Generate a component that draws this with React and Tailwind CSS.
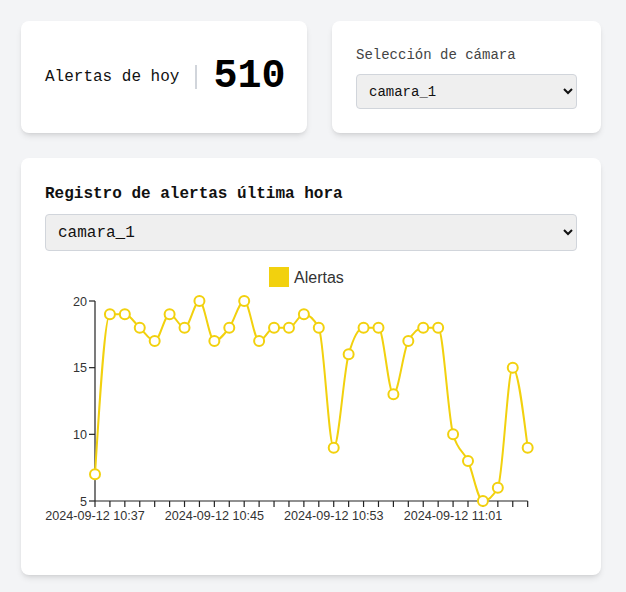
import React from "react";

const VALUES = [7, 19, 19, 18, 17, 19, 18, 20, 17, 18, 20, 17, 18, 18, 19, 18, 9, 16, 18, 18, 13, 17, 18, 18, 10, 8, 5, 6, 15, 9];
const YELLOW = "#f2d10e";
const X0 = 50;
const STEP = 14.92;
const yOf = (v) => 239 - ((v - 5) * 200) / 15;

function monotonePath(pts) {
  const n = pts.length;
  const sign = (x) => (x < 0 ? -1 : 1);
  const t = new Array(n).fill(0);
  for (let i = 1; i < n - 1; i++) {
    const [x0, y0] = pts[i - 1];
    const [x1, y1] = pts[i];
    const [x2, y2] = pts[i + 1];
    const h0 = x1 - x0, h1 = x2 - x1;
    const s0 = (y1 - y0) / h0, s1 = (y2 - y1) / h1;
    const p = (s0 * h1 + s1 * h0) / (h0 + h1);
    t[i] = (sign(s0) + sign(s1)) * Math.min(Math.abs(s0), Math.abs(s1), 0.5 * Math.abs(p)) || 0;
  }
  {
    const h = pts[1][0] - pts[0][0];
    t[0] = (3 * (pts[1][1] - pts[0][1]) / h - t[1]) / 2;
    const hl = pts[n - 1][0] - pts[n - 2][0];
    t[n - 1] = (3 * (pts[n - 1][1] - pts[n - 2][1]) / hl - t[n - 2]) / 2;
  }
  let d = `M${pts[0][0]},${pts[0][1]}`;
  for (let i = 0; i < n - 1; i++) {
    const [x0, y0] = pts[i];
    const [x1, y1] = pts[i + 1];
    const dx = (x1 - x0) / 3;
    d += `C${x0 + dx},${y0 + dx * t[i]},${x1 - dx},${y1 - dx * t[i + 1]},${x1},${y1}`;
  }
  return d;
}

function Chart() {
  const pts = VALUES.map((v, i) => [X0 + i * STEP, yOf(v)]);
  const xEnd = X0 + (VALUES.length - 1) * STEP;
  const yTicks = [20, 15, 10, 5];
  const labels = [
    [0, "2024-09-12 10:37"],
    [8, "2024-09-12 10:45"],
    [16, "2024-09-12 10:53"],
    [24, "2024-09-12 11:01"],
  ];
  return (
    <svg width="532" height="289" className="block mt-[11px]" style={{ fontFamily: '"Liberation Sans", Arial, sans-serif' }}>
      <rect x="224" y="5" width="20" height="20" fill={YELLOW} />
      <text x="249" y="21" fontSize="16" fill="#333">Alertas</text>
      <line x1={X0} y1="39" x2={X0} y2="239" stroke="#222" strokeWidth="1.2" />
      {yTicks.map((v) => (
        <g key={v}>
          <line x1={X0 - 6} y1={yOf(v)} x2={X0} y2={yOf(v)} stroke="#222" strokeWidth="1.2" />
          <text x={X0 - 8} y={yOf(v) + 4.5} fontSize="12.6" fill="#333" textAnchor="end">{v}</text>
        </g>
      ))}
      <line x1={X0} y1="239" x2={xEnd} y2="239" stroke="#222" strokeWidth="1.2" />
      {VALUES.map((_, i) => (
        <line key={i} x1={X0 + i * STEP} y1="239" x2={X0 + i * STEP} y2="245" stroke="#222" strokeWidth="1.2" />
      ))}
      {labels.map(([i, s]) => (
        <text key={i} x={X0 + i * STEP} y="258" fontSize="12.6" fill="#333" textAnchor="middle">{s}</text>
      ))}
      <path d={monotonePath(pts)} fill="none" stroke={YELLOW} strokeWidth="2" />
      {pts.map(([x, y], i) => (
        <circle key={i} cx={x} cy={y} r="5" fill="#fff" stroke={YELLOW} strokeWidth="2" />
      ))}
    </svg>
  );
}

export default function App() {
  const mono = { fontFamily: '"Liberation Mono", "DejaVu Sans Mono", monospace' };
  return (
    <div className="min-h-screen bg-[#f3f4f6] px-[21px] pt-[21px] pb-[17px]" style={mono}>
      <div className="w-[580px] flex flex-col gap-[25px]">
        <div className="grid grid-cols-[286px_269px] gap-[25px]">
          <div className="bg-white rounded-lg shadow-md p-6 flex items-center whitespace-nowrap">
            <span className="shrink-0 text-base text-[#111]">Alertas de hoy</span>
            <span className="shrink-0 mx-4 w-[2px] h-6 bg-[#d1d5db]"></span>
            <span className="shrink-0 text-[40px] leading-none font-bold text-black">510</span>
          </div>
          <div className="bg-white rounded-lg shadow-md p-6">
            <div className="text-sm leading-5 text-[#444]">Selección de cámara</div>
            <select
              className="mt-[9px] w-full h-[35px] pl-2 pr-2 text-sm text-[#111] bg-[#efefef] border border-[#d1d5db] rounded"
              style={mono}
              defaultValue="camara_1"
            >
              <option value="camara_1">camara_1</option>
            </select>
          </div>
        </div>
        <div className="bg-white rounded-lg shadow-md p-6">
          <div className="text-base leading-6 font-bold text-[#111]">Registro de alertas última hora</div>
          <select
            className="mt-2 w-full h-[37px] pl-2 pr-2 text-base text-[#111] bg-[#efefef] border border-[#d1d5db] rounded"
            style={mono}
            defaultValue="camara_1"
          >
            <option value="camara_1">camara_1</option>
          </select>
          <Chart />
        </div>
      </div>
    </div>
  );
}
